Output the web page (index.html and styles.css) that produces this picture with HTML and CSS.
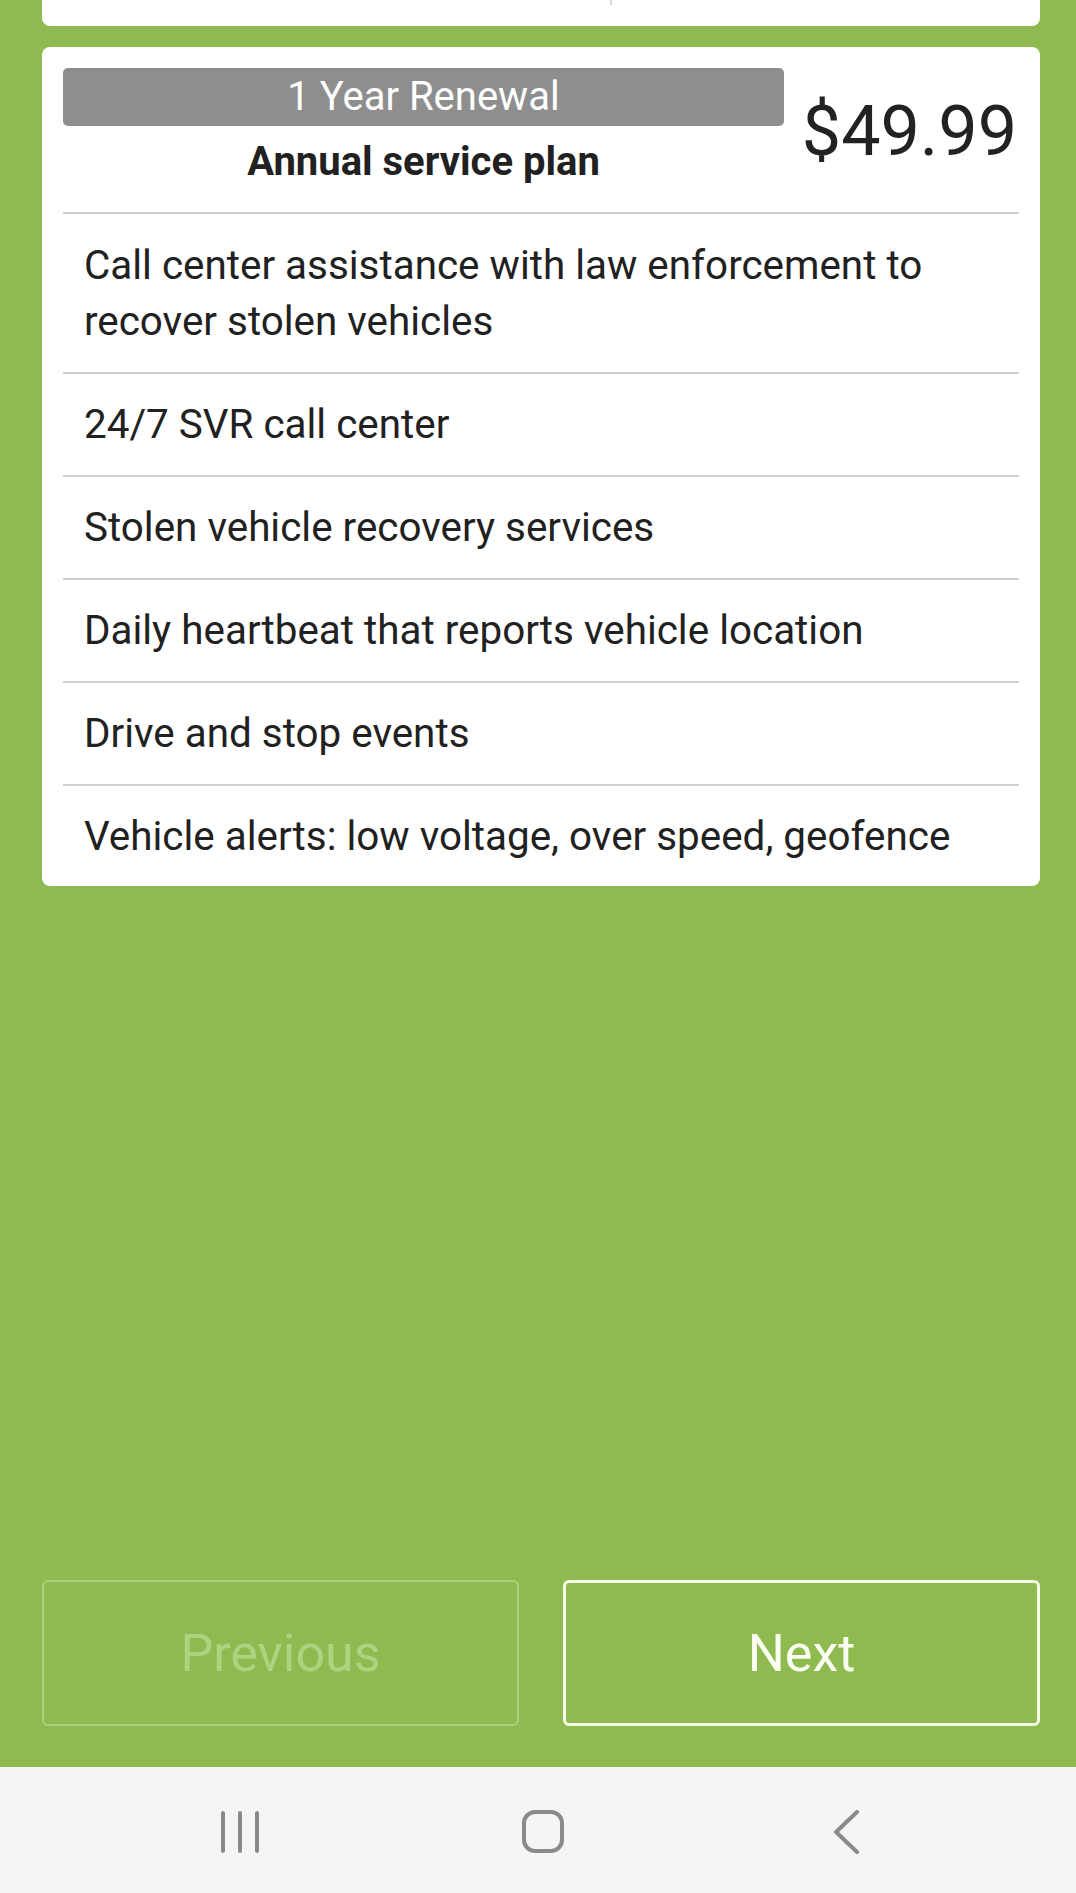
FILE: index.html
```html
<!DOCTYPE html>
<html lang="en">
<head>
<meta charset="utf-8">
<title>Service plan</title>
<link rel="stylesheet" href="styles.css">
</head>
<body>
<div class="screen">
  <main class="content">
    <div class="card card-top"><div class="top-left"></div><div class="top-right"></div></div>
    <section class="card plan">
      <header class="plan-head">
        <div class="plan-title">
          <div class="plan-badge">1 Year Renewal</div>
          <div class="plan-sub">Annual service plan</div>
        </div>
        <div class="plan-price">$49.99</div>
      </header>
      <ul class="features">
        <li>Call center assistance with law enforcement to recover stolen vehicles</li>
        <li>24/7 SVR call center</li>
        <li>Stolen vehicle recovery services</li>
        <li>Daily heartbeat that reports vehicle location</li>
        <li>Drive and stop events</li>
        <li>Vehicle alerts: low voltage, over speed, geofence</li>
      </ul>
    </section>
  </main>
  <div class="actions">
    <button class="btn btn-disabled" type="button">Previous</button>
    <button class="btn btn-primary" type="button">Next</button>
  </div>
  <nav class="navbar">
    <div class="nav-item">
      <svg width="44" height="44" viewBox="0 0 44 44"><g fill="none" stroke="#8a8a8a" stroke-width="4" stroke-linecap="round"><path d="M5 3v38M22 3v38M39 3v38"/></g></svg>
    </div>
    <div class="nav-item">
      <svg width="44" height="44" viewBox="0 0 44 44"><rect x="3" y="2" width="38" height="39" rx="11" fill="none" stroke="#8a8a8a" stroke-width="4"/></svg>
    </div>
    <div class="nav-item">
      <svg width="44" height="44" viewBox="0 0 44 44"><path d="M33 2L12 22L33 42" fill="none" stroke="#8a8a8a" stroke-width="4" stroke-linecap="round" stroke-linejoin="round"/></svg>
    </div>
  </nav>
</div>
</body>
</html>
```
FILE: styles.css
```css
* { box-sizing: border-box; }
html, body { margin: 0; padding: 0; }
body {
  width: 1076px;
  height: 1893px;
  background: #8fba50;
  font-family: Roboto, "Noto Sans", "Liberation Sans", sans-serif;
  color: #212121;
  overflow: hidden;
}
.screen {
  display: flex;
  flex-direction: column;
  height: 1893px;
}
.content {
  display: flex;
  flex-direction: column;
  gap: 21px;
  padding: 0 36px 0 42px;
}
.card {
  background: #ffffff;
  border-radius: 8px;
}
.card-top {
  height: 26px;
  border-radius: 0 0 8px 8px;
  display: flex;
  align-items: flex-start;
}
.top-left {
  width: 570px;
  height: 5px;
  border-right: 2px solid #d8d8d8;
}
.top-right { flex: 1; }
.plan {
  padding: 0 21px;
}
.plan-head {
  display: flex;
  align-items: center;
  padding: 21px 0 22px;
}
.plan-title {
  width: 721px;
  display: flex;
  flex-direction: column;
  align-items: stretch;
  gap: 8px;
}
.plan-badge {
  height: 58px;
  line-height: 58px;
  background: #8e8e8e;
  border-radius: 5px;
  color: #ffffff;
  font-size: 40px;
  text-align: center;
}
.plan-sub {
  font-size: 40px;
  font-weight: 700;
  line-height: 56px;
  text-align: center;
}
.plan-price {
  flex: 1;
  text-align: right;
  font-size: 70px;
  line-height: 82px;
  margin-right: 2px;
  margin-top: 4px;
  color: #222222;
}
.features {
  list-style: none;
  margin: 0;
  padding: 0;
}
.features li {
  border-top: 2px solid #cfcfcf;
  padding: 23px 21px 22px;
  font-size: 40.4px;
  line-height: 56px;
}
.features li:first-child {
  padding-top: 24px;
}
.features li:last-child {
  padding-bottom: 21px;
}
.actions {
  margin-top: auto;
  display: grid;
  grid-template-columns: 1fr 1fr;
  gap: 44px;
  padding: 0 36px 41px 42px;
}
.btn {
  height: 146px;
  background: transparent;
  border-radius: 6px;
  font-family: Roboto, "Noto Sans", "Liberation Sans", sans-serif;
  font-size: 52px;
  cursor: pointer;
}
.btn-disabled {
  border: 2px solid #a9d27c;
  color: #aad480;
}
.btn-primary {
  border: 3px solid #f6fde6;
  color: #fbfff2;
}
.navbar {
  height: 126px;
  background: #f4f5f5;
  display: grid;
  grid-template-columns: repeat(3, 303px);
  justify-content: center;
  align-items: center;
  padding: 4px 0 0 10px;
}
.nav-item {
  display: flex;
  justify-content: center;
  align-items: center;
}
.nav-item svg { display: block; }
```
